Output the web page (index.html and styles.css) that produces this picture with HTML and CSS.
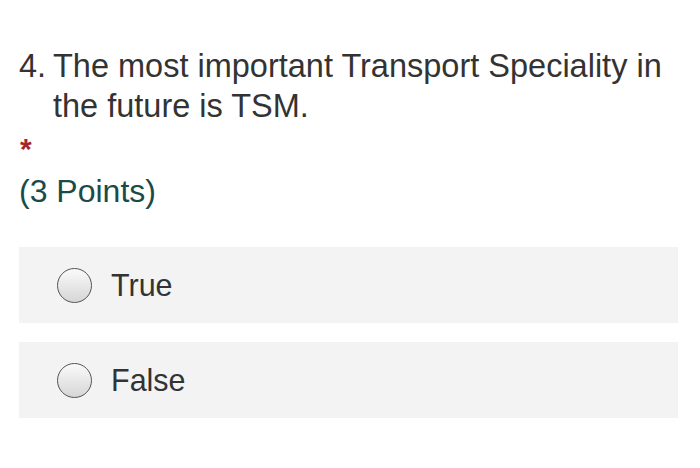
FILE: index.html
```html
<!DOCTYPE html>
<html>
<head>
<meta charset="utf-8">
<link rel="stylesheet" href="styles.css">
</head>
<body>
<div class="question">
  <div class="title">
    <span class="num">4.</span>
    <span class="text">The most important Transport Speciality in the future is TSM.</span>
  </div>
  <div class="required">*</div>
  <div class="points">(3 Points)</div>
  <div class="options">
    <label class="option"><span class="radio"></span><span class="label">True</span></label>
    <label class="option"><span class="radio"></span><span class="label">False</span></label>
  </div>
</div>
</body>
</html>
```
FILE: styles.css
```css
html, body {
  margin: 0;
  padding: 0;
  background: #ffffff;
}
body {
  font-family: "Liberation Sans", Arial, sans-serif;
  color: #333333;
}
.question {
  padding: 46px 22px 0 19px;
}
.title {
  display: flex;
  font-size: 32.5px;
  line-height: 40px;
  color: #333333;
}
.num {
  width: 34px;
  flex: none;
}
.text {
  flex: 1;
}
.required {
  color: #a4262c;
  font-size: 30px;
  line-height: 30px;
  margin-top: 8px;
  padding-left: 1px;
  height: 26px;
  font-weight: bold;
}
.points {
  font-size: 32px;
  line-height: 40px;
  color: #1b4b48;
  margin-top: 11px;
}
.options {
  display: flex;
  flex-direction: column;
  gap: 19px;
  margin-top: 36px;
}
.option {
  display: flex;
  align-items: center;
  height: 76px;
  background: #f3f3f3;
  padding-left: 38px;
}
.radio {
  width: 35px;
  height: 35px;
  border-radius: 50%;
  border: 1.5px solid #555555;
  box-sizing: border-box;
  background: linear-gradient(#fafafa, #d6d6d6);
  flex: none;
}
.label {
  margin-left: 19px;
  font-size: 30.5px;
  color: #333333;
}
```
